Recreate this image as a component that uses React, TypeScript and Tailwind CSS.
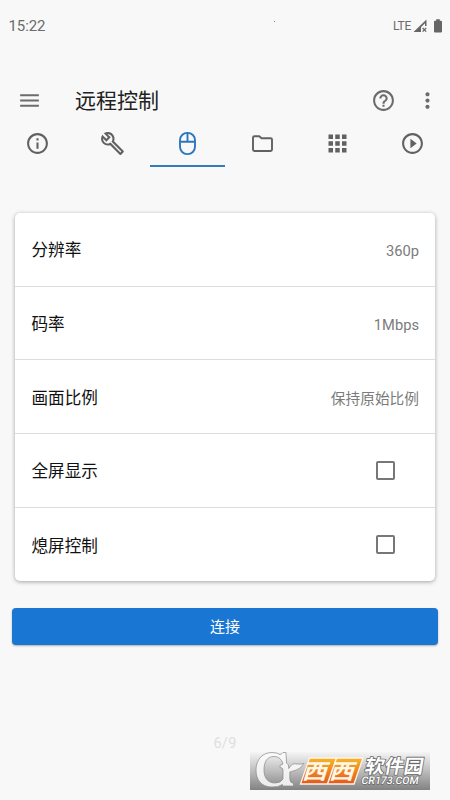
import type { ReactNode } from "react";
import {
  MdMenu,
  MdHelpOutline,
  MdMoreVert,
  MdInfoOutline,
  MdOutlineBuild,
  MdApps,
  MdPlayCircleOutline,
} from "react-icons/md";

function MouseIcon() {
  return (
    <svg width="25" height="25" viewBox="0 0 25 25" fill="none" stroke="currentColor" strokeWidth="1.9">
      <rect x="5" y="1.9" width="15" height="21.2" rx="7.3" />
      <path d="M5 10.7H20M12.5 2V10.7" />
    </svg>
  );
}

function FolderIcon() {
  return (
    <svg width="25" height="25" viewBox="0 0 25 25" fill="none" stroke="currentColor" strokeWidth="1.9" strokeLinejoin="round">
      <path d="M4.500 5.200H9.300L11.500 7.200H20.600Q22 7.200 22 8.600V18.600Q22 20 20.600 20H4.400Q3 20 3 18.600V6.600Q3 5.200 4.500 5.200Z" />
    </svg>
  );
}

function StatusBar() {
  return (
    <div className="flex h-[52px] items-center pl-[8.500px] pr-[7px] text-[#6b6b6b]">
      <span className="text-[15px] tracking-[-0.1px]">15:22</span>
      <span className="mb-[9px] ml-[229px] h-px w-px bg-[#b08080]" />
      <span className="ml-auto text-[12px] tracking-[-0.3px]">LTE</span>
      <svg className="ml-[2px]" width="14" height="14" viewBox="0 0 14 14">
        <path d="M13.500 0.500v6.500H12V4.200L8 8.200V13H0.500z" fill="#666" />
        <path d="M9.600 9l3.600 3.600M13.200 9L9.600 12.600" stroke="#666" strokeWidth="1.300" />
      </svg>
      <svg className="ml-[6px]" width="10" height="14" viewBox="0 0 10 14">
        <path d="M3.200 0.300h3.600v1.500H8q1 0 1 1V12.500q0 1-1 1H2q-1 0-1-1V2.800q0-1 1-1h1.200z" fill="#666" />
      </svg>
    </div>
  );
}

function Tab({ active, children }: { active?: boolean; children: ReactNode }) {
  return (
    <div
      className={
        active
          ? "flex h-[47px] w-[75px] justify-center border-b-2 border-[#347bb8] pt-[11px] text-[#2b77bd]"
          : "flex h-[47px] w-[75px] justify-center pt-[11px]"
      }
    >
      {children}
    </div>
  );
}

function Row({ label, value }: { label: string; value?: string }) {
  return (
    <div className="flex h-[73.7px] items-center justify-between border-b border-[#ddd] pl-[16.500px] pr-[16px] last:border-b-0">
      <span className="pt-[5px] text-[16.600px] text-[#111]">{label}</span>
      {value ? (
        <span className="pt-[4px] text-[14.700px] text-[#7b7b7b]">{value}</span>
      ) : (
        <span className="mr-[24.500px] h-[19px] w-[19px] rounded-[2px] border-2 border-[#777]" />
      )}
    </div>
  );
}

function Watermark() {
  return (
    <svg className="block" width="182" height="40" viewBox="0 0 182 40">
      <defs>
        <linearGradient id="plate" x1="0" y1="0" x2="0" y2="1">
          <stop offset="0" stopColor="#f5f5f5" />
          <stop offset="0.5" stopColor="#bdbdbd" />
          <stop offset="1" stopColor="#828282" />
        </linearGradient>
        <linearGradient id="orange" x1="0" y1="0" x2="0" y2="1">
          <stop offset="0" stopColor="#f5b52c" />
          <stop offset="1" stopColor="#e3581f" />
        </linearGradient>
        <linearGradient id="silver" x1="0" y1="0" x2="0" y2="1">
          <stop offset="0" stopColor="#fafafa" />
          <stop offset="1" stopColor="#ececec" />
        </linearGradient>
      </defs>
      <rect x="0" y="2" width="180" height="38" fill="url(#plate)" />
      <path
        d="M30 4.500Q32 4 33 2.500H36L36.500 13Q39 14 38.800 18.500Q42 12.500 47 14Q51 14.500 54 13.500Q50 19.500 45 20.500Q41 21.500 39.800 22V29Q40 33 43.500 33.500V36H32.500V34.500Q28 37.500 21 37C11 36.500 6 29.500 6 20C6 9 13 2.500 22 2.500Q27 2.500 30 4.500ZM33 14Q31 6.500 24 6.500C17 6.500 14 12 14 20C14 28 18 33 25 33Q31 33 33 29V20Q33 17.500 30 17.500V15.500Z"
        fill="url(#silver)"
        stroke="#888"
        strokeWidth="0.7"
        fillRule="evenodd"
      />
      <path d="M59.500 8h53.500l-9 26H50.500z" fill="url(#orange)" stroke="#fff5e8" strokeWidth="1.300" />
      <path d="M86.500 8L77.500 34" stroke="#fff5e8" strokeWidth="1.500" />
      <g
        transform="skewX(-17)"
        fill="#fff7e6"
        fontFamily="'Noto Sans CJK SC', sans-serif"
        fontWeight="700"
      >
        <text transform="translate(60.500 28.800) scale(1.180 1)" fontSize="21">西</text>
        <text transform="translate(87.500 28.800) scale(1.180 1)" fontSize="21">西</text>
      </g>
      <g
        transform="skewX(-10)"
        fill="#fff"
        stroke="#6b6b6b"
        strokeWidth="1.600"
        paintOrder="stroke"
        fontWeight="700"
      >
        <text x="118" y="23" fontSize="19" textLength="58.500" lengthAdjust="spacingAndGlyphs" fontFamily="'Noto Sans CJK SC', sans-serif">
          软件园
        </text>
        <text x="117" y="33.600" fontSize="10.500" strokeWidth="1.400" textLength="57" lengthAdjust="spacingAndGlyphs" fontFamily="Roboto, sans-serif" fontWeight="500">
          CR173.COM
        </text>
      </g>
    </svg>
  );
}

export default function App() {
  return (
    <div className="flex h-[800px] w-[450px] flex-col overflow-hidden bg-[#f8f8f8] font-[Roboto,'Noto_Sans_CJK_SC',sans-serif]">
      <StatusBar />
      <header className="mt-[28px] flex h-[41px] items-center pl-[16.500px] pr-[10.500px] text-[#6b6b6b]">
        <MdMenu size={25} />
        <h1 className="ml-[33.500px] pt-[2px] text-[21px] text-[#212121]">远程控制</h1>
        <MdHelpOutline className="ml-auto" size={25} />
        <MdMoreVert className="ml-[18.500px]" size={25} />
      </header>
      <nav className="flex h-[47px] -translate-y-px text-[#616161]">
        <Tab><MdInfoOutline size={25} /></Tab>
        <Tab><MdOutlineBuild size={25} /></Tab>
        <Tab active><MouseIcon /></Tab>
        <Tab><FolderIcon /></Tab>
        <Tab><MdApps className="-mt-px" size={27} /></Tab>
        <Tab><MdPlayCircleOutline size={25} /></Tab>
      </nav>
      <section className="mx-[15px] mt-[45px] h-[367.500px] shrink-0 rounded-[5px] bg-white shadow-[0_1px_4px_rgba(0,0,0,0.35)]">
        <Row label="分辨率" value="360p" />
        <Row label="码率" value="1Mbps" />
        <Row label="画面比例" value="保持原始比例" />
        <Row label="全屏显示" />
        <Row label="熄屏控制" />
      </section>
      <button className="mx-[12.400px] mt-[27px] h-[37.500px] shrink-0 rounded-[4px] bg-[#1976d2] pt-px text-[15px] text-white shadow-[0_1px_2px_rgba(0,0,0,0.3)]">
        连接
      </button>
      <div className="mt-[88px] text-center text-[14.500px] leading-[22px] tracking-[0.3px] text-[#dfdfdf]">6/9</div>
      <div className="-mt-[5px] ml-[250px]">
        <Watermark />
      </div>
    </div>
  );
}
